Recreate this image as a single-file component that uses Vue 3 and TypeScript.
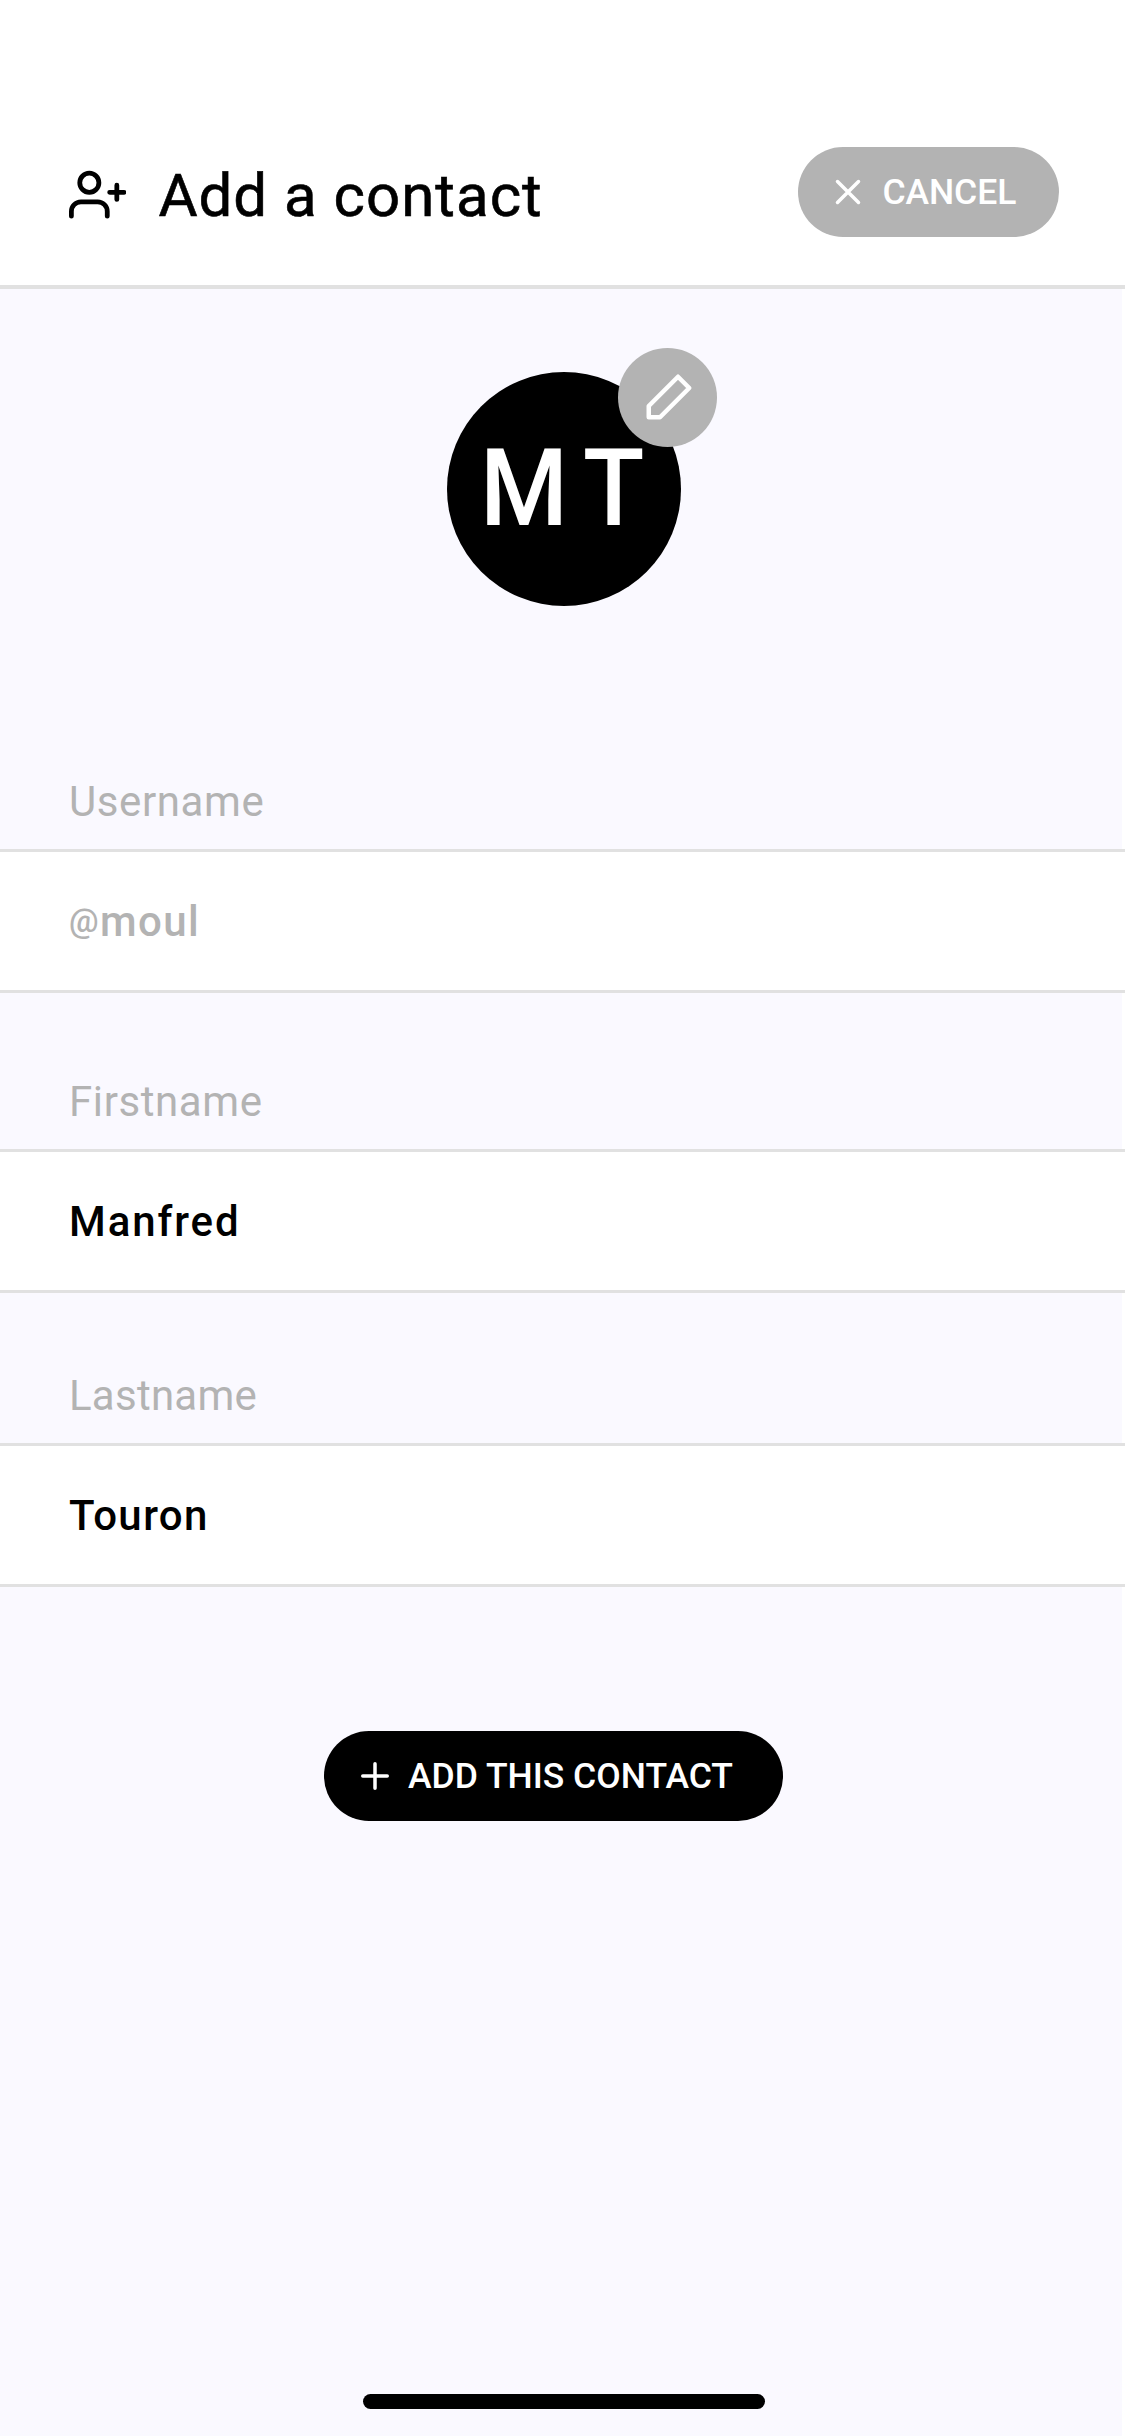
<script setup lang="ts">
import { computed, ref } from 'vue'

interface Field {
  id: string
  label: string
  prefix?: string
  value: string
  muted?: boolean
}

const fields = ref<Field[]>([
  { id: 'username', label: 'Username', prefix: '@', value: 'moul', muted: true },
  { id: 'firstname', label: 'Firstname', value: 'Manfred' },
  { id: 'lastname', label: 'Lastname', value: 'Touron' },
])

const initials = computed<string[]>(() => fields.value.slice(1).map((f) => f.value.charAt(0)))
</script>

<template>
  <div class="screen">
    <header class="header">
      <svg class="user-icon" viewBox="0 0 24 24">
        <path d="M16 21v-2a4 4 0 0 0-4-4H5a4 4 0 0 0-4 4v2" />
        <circle cx="8.5" cy="7" r="4" />
        <path d="M20 8v6M23 11h-6" />
      </svg>
      <h1 class="title">Add a contact</h1>
      <button class="pill cancel" type="button">
        <svg class="pill-icon" viewBox="0 0 24 24"><path d="M18 6L6 18M6 6l12 12" /></svg>
        <span class="cancel-text">CANCEL</span>
      </button>
    </header>

    <main class="content">
      <div class="avatar">
        <span v-for="(letter, i) in initials" :key="i" class="initial">{{ letter }}</span>
        <button class="edit" type="button" aria-label="Edit">
          <svg class="edit-icon" viewBox="0 0 24 24"><path d="M16 3l5 5L8 21H3v-5L16 3z" /></svg>
        </button>
      </div>

      <section v-for="field in fields" :key="field.id" class="field" :class="field.id">
        <div class="label">{{ field.label }}</div>
        <div class="value" :class="{ muted: field.muted }"><span v-if="field.prefix" class="prefix">{{ field.prefix }}</span>{{ field.value }}</div>
      </section>

      <button class="pill add" type="button">
        <svg class="pill-icon" viewBox="0 0 24 24"><path d="M12 5v14M5 12h14" /></svg>
        <span class="add-text">ADD THIS CONTACT</span>
      </button>

      <div class="home-bar"></div>
    </main>
  </div>
</template>

<style>
body {
  margin: 0;
  background: #fff;
}
</style>

<style scoped>
.screen {
  width: 1125px;
  height: 2436px;
  display: flex;
  flex-direction: column;
  overflow: hidden;
  font-family: Roboto, "Liberation Sans", sans-serif;
  color: #000;
}
.header {
  box-sizing: border-box;
  height: 289px;
  flex: none;
  display: flex;
  align-items: flex-start;
  padding: 147px 66px 0 69px;
  border-bottom: 4px solid #e1e1e1;
  background: #fff;
}
svg {
  display: block;
  flex: none;
  fill: none;
  stroke: currentColor;
  stroke-width: 2;
  stroke-linecap: round;
  stroke-linejoin: round;
}
.user-icon {
  width: 57.4px;
  height: 57.4px;
  margin-top: 18.6px;
}
.title {
  margin: 14px 0 0 32px;
  font-size: 60px;
  line-height: 70px;
  font-weight: 400;
  letter-spacing: 1px;
  white-space: nowrap;
  -webkit-text-stroke: 0.6px currentColor;
}
.pill {
  box-sizing: border-box;
  height: 90px;
  flex: none;
  display: flex;
  align-items: center;
  padding: 0;
  border: 0;
  border-radius: 45px;
  color: #fff;
  font-family: inherit;
  font-size: 35.5px;
  line-height: 42px;
  font-weight: 500;
  white-space: nowrap;
}
.pill-icon {
  width: 42px;
  height: 42px;
}
.cancel {
  width: 261px;
  margin-left: auto;
  padding-left: 28.5px;
  background: #b3b3b3;
}
.cancel-text {
  margin-left: 14px;
  letter-spacing: -0.1px;
}
.content {
  flex: 1;
  display: flex;
  flex-direction: column;
  background: linear-gradient(to right, #faf9ff 1122px, #fff 1122px);
}
.avatar {
  position: relative;
  box-sizing: border-box;
  width: 234px;
  height: 234px;
  flex: none;
  margin: 83px 0 0 447px;
  padding: 53px 0 0 33px;
  display: flex;
  gap: 9px;
  border-radius: 50%;
  background: #000;
  color: #fff;
}
.initial {
  font-size: 107px;
  line-height: 128px;
  font-weight: 500;
  transform: scaleX(0.94);
  transform-origin: left center;
}
.edit {
  position: absolute;
  left: 171px;
  top: -24px;
  width: 99px;
  height: 99px;
  padding: 0;
  border: 0;
  border-radius: 50%;
  display: flex;
  align-items: center;
  justify-content: center;
  background: #b3b3b3;
  color: #fff;
}
.edit-icon {
  width: 54px;
  height: 54px;
  margin: 0 0 2px 2px;
}
.field {
  flex: none;
}
.username {
  margin-top: 171px;
}
.firstname {
  margin-top: 84px;
}
.lastname {
  margin-top: 78px;
}
.label {
  height: 72px;
  padding-left: 69px;
  font-size: 42px;
  line-height: 50px;
  letter-spacing: 0.6px;
  color: #b3b3b3;
}
.lastname .label {
  letter-spacing: 0.25px;
}
.value {
  box-sizing: border-box;
  height: 144px;
  padding: 45px 0 0 69px;
  border-top: 3px solid #e1e1e1;
  border-bottom: 3px solid #e1e1e1;
  background: #fff;
  font-size: 42px;
  line-height: 50px;
  font-weight: 500;
  letter-spacing: 1.4px;
}
.firstname .value {
  letter-spacing: 1.9px;
}
.muted {
  color: #b3b3b3;
}
.prefix {
  position: relative;
  top: -4px;
  font-size: 33px;
  line-height: 1;
}
.add {
  width: 459px;
  margin: 144px 0 0 324px;
  padding-left: 30px;
  background: #000;
}
.add-text {
  margin-left: 12px;
}
.home-bar {
  width: 402px;
  height: 15px;
  flex: none;
  margin: auto 0 27px 363px;
  border-radius: 7.5px;
  background: #000;
}
</style>
